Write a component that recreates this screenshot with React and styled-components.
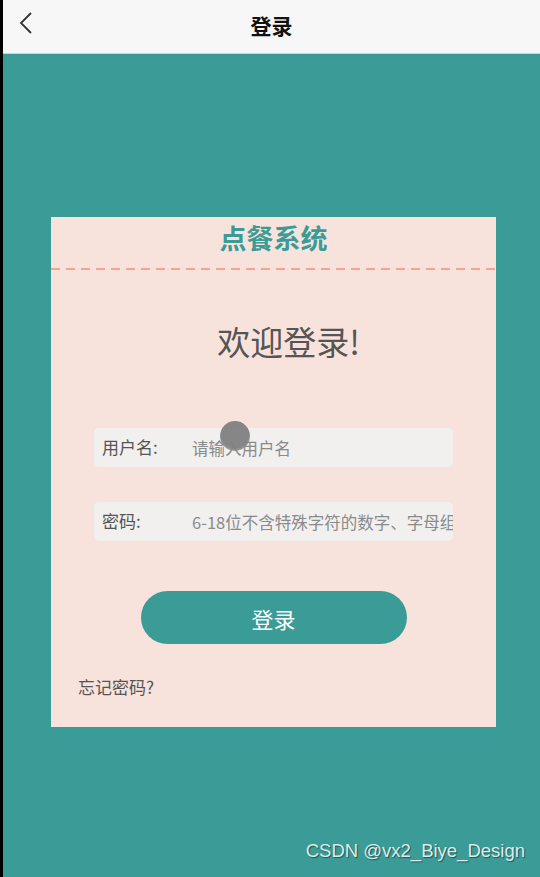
import React from "react";
import styled, { createGlobalStyle } from "styled-components";

const GlobalStyle = createGlobalStyle`
  html, body {
    margin: 0;
    padding: 0;
    background: #000;
  }
  body {
    font-family: "Noto Sans CJK SC", "Noto Sans", sans-serif;
  }
`;

function App() {
  return (
    <>
      <GlobalStyle />
      <Screen>
        <Header>
          <BackButton>
            <svg width="14" height="24" viewBox="0 0 14 24">
              <path
                d="M12 2 L2 12 L12 22"
                fill="none"
                stroke="#333"
                strokeWidth="1.8"
              />
            </svg>
          </BackButton>
          <HeaderTitle>登录</HeaderTitle>
        </Header>
        <Body>
          <Card>
            <CardTitle>点餐系统</CardTitle>
            <Dashed />
            <Welcome>欢迎登录!</Welcome>
            <Form>
              <Field>
                <FieldLabel>用户名:</FieldLabel>
                <FieldInput placeholder="请输入用户名" />
                <TouchDot />
              </Field>
              <Field>
                <FieldLabel>密码:</FieldLabel>
                <FieldInput
                  type="password"
                  placeholder="6-18位不含特殊字符的数字、字母组合"
                />
              </Field>
            </Form>
            <LoginButton>登录</LoginButton>
            <Forgot>忘记密码?</Forgot>
          </Card>
          <Watermark>CSDN @vx2_Biye_Design</Watermark>
        </Body>
      </Screen>
    </>
  );
}

const Screen = styled.div`
  margin-left: 3px;
  height: 877px;
  display: flex;
  flex-direction: column;
  background: #3a9b97;
`;
const Header = styled.header`
  position: relative;
  height: 53px;
  flex-shrink: 0;
  display: flex;
  align-items: center;
  justify-content: center;
  background: #f7f7f7;
  border-bottom: 1px solid #b9dedc;
`;
const BackButton = styled.div`
  position: absolute;
  left: 16px;
  top: 11px;
  display: flex;
`;
const HeaderTitle = styled.h1`
  margin: 0 0 4px 0;
  font-size: 21px;
  font-weight: 700;
  color: #111;
`;
const Body = styled.div`
  flex: 1;
  display: flex;
  flex-direction: column;
  align-items: flex-start;
  padding: 163px 0 0 48px;
`;
const Card = styled.div`
  width: 445px;
  height: 510px;
  box-sizing: border-box;
  background: #f7e3dc;
  display: flex;
  flex-direction: column;
  align-items: center;
`;
const CardTitle = styled.div`
  margin-top: 2px;
  height: 38px;
  line-height: 38px;
  font-size: 27px;
  font-weight: 700;
  color: #3a9b97;
`;
const Dashed = styled.div`
  width: 100%;
  height: 2px;
  margin-top: 11px;
  background: repeating-linear-gradient(
    to right,
    #f5a393 0 9px,
    transparent 9px 15px
  );
`;
const Welcome = styled.div`
  margin-top: 49px;
  padding-left: 30px;
  font-size: 33px;
  line-height: 44px;
  color: #555;
`;
const Form = styled.div`
  width: 359px;
  margin-top: 65px;
  display: flex;
  flex-direction: column;
  gap: 35px;
`;
const Field = styled.label`
  position: relative;
  height: 39px;
  display: flex;
  align-items: center;
  background: #f1f0ef;
  border-radius: 5px;
`;
const FieldLabel = styled.span`
  width: 98px;
  flex-shrink: 0;
  padding-left: 8px;
  box-sizing: border-box;
  font-size: 17px;
  color: #555;
  margin-top: -2px;
`;
const FieldInput = styled.input`
  flex: 1;
  min-width: 0;
  border: none;
  outline: none;
  background: transparent;
  font-family: "Noto Sans CJK SC", "Noto Sans", sans-serif;
  font-size: 16.5px;
  color: #555;
  padding: 0;
  &::placeholder {
    color: #8a8a8a;
  }
`;
const TouchDot = styled.span`
  position: absolute;
  left: 126px;
  top: -7px;
  width: 30px;
  height: 30px;
  border-radius: 50%;
  background: radial-gradient(
    circle at 50% 45%,
    rgba(128, 128, 128, 0.95) 0 60%,
    rgba(150, 150, 150, 0.7) 85%,
    rgba(170, 170, 170, 0.2) 100%
  );
`;
const LoginButton = styled.button`
  margin-top: 50px;
  width: 266px;
  height: 53px;
  border: none;
  border-radius: 27px;
  background: #3a9b97;
  color: #fff;
  font-family: "Noto Sans CJK SC", "Noto Sans", sans-serif;
  font-size: 22px;
  cursor: pointer;
`;
const Forgot = styled.div`
  align-self: flex-start;
  margin: 30px 0 0 27px;
  font-size: 17px;
  color: #555;
`;
const Watermark = styled.div`
  align-self: flex-end;
  margin: 113px 15px 0 0;
  font-family: "Liberation Sans", Arial, sans-serif;
  font-size: 18.5px;
  color: #dcebea;
  text-shadow: 1px 1px 1px rgba(0, 0, 0, 0.45);
`;

export default App;
